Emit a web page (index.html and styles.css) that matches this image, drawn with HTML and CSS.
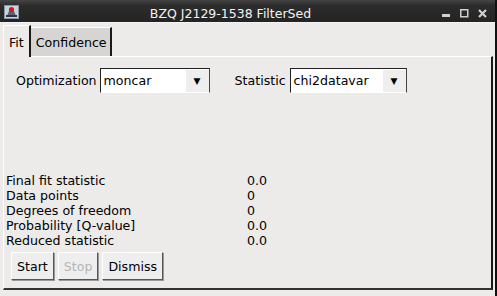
FILE: index.html
```html
<!DOCTYPE html>
<html lang="en">
<head>
    <meta charset="UTF-8">
    <title>BZQ J2129-1538 FilterSed</title>
    <link rel="stylesheet" href="styles.css">
</head>
<body>
    <div class="window">
        <div class="titlebar">
            <svg class="app-icon" width="15" height="14" viewBox="0 0 15 14">
                <rect x="0.5" y="0.5" width="14" height="13" fill="#c9d3df" stroke="#8a97a8"/>
                <path d="M3 11 L5 6 L10 6 L12 11 Z" fill="#5a6470"/>
                <rect x="2" y="10" width="11" height="2" fill="#2e3640"/>
                <circle cx="7.5" cy="4.5" r="2.6" fill="#d21a1a"/>
            </svg>
            <span class="title">BZQ J2129-1538 FilterSed</span>
            <div class="controls">
                <svg width="9" height="9" viewBox="0 0 9 9"><rect x="0" y="5" width="8" height="3" fill="#d0d0d0"/></svg>
                <svg width="9" height="9" viewBox="0 0 9 9"><rect x="0.75" y="0.75" width="7" height="7" fill="none" stroke="#d0d0d0" stroke-width="1.5"/></svg>
                <svg width="9" height="9" viewBox="0 0 9 9"><path d="M1 1 L8 8 M8 1 L1 8" stroke="#d0d0d0" stroke-width="2.2"/></svg>
            </div>
        </div>
        <div class="client">
            <div class="tabs">
                <div class="tab active">Fit</div>
                <div class="tab">Confidence</div>
            </div>
            <div class="panel">
                <div class="options">
                    <span class="label">Optimization</span>
                    <div class="combo opt">
                        <span class="field">moncar</span>
                        <span class="arrow">&#9660;</span>
                    </div>
                    <span class="label stat-label">Statistic</span>
                    <div class="combo stat">
                        <span class="field">chi2datavar</span>
                        <span class="arrow">&#9660;</span>
                    </div>
                </div>
                <div class="results">
                    <span>Final fit statistic</span><span>0.0</span>
                    <span>Data points</span><span>0</span>
                    <span>Degrees of freedom</span><span>0</span>
                    <span>Probability [Q-value]</span><span>0.0</span>
                    <span>Reduced statistic</span><span>0.0</span>
                </div>
                <div class="buttons">
                    <button class="btn">Start</button>
                    <button class="btn" disabled>Stop</button>
                    <button class="btn">Dismiss</button>
                </div>
            </div>
        </div>
    </div>
</body>
</html>
```
FILE: styles.css
```css
html, body{
    margin: 0;
    padding: 0;
    background: #111;
}
/* 窗口外框 */
.window{
    width: 495px;
    height: 296px;
    background: #ecebe9;
    font-family: "DejaVu Sans", sans-serif;
    font-size: 12.6px;
    color: #000;
    display: flex;
    flex-direction: column;
}
.titlebar{
    height: 22px;
    background: linear-gradient(#454545, #2c2c2c 25%, #242424);
    border-bottom: 1px solid #f4f4f4;
    display: flex;
    align-items: center;
    color: #f2f2f2;
}
.app-icon{
    margin: 2px 0 0 4px;
}
.title{
    flex: 1;
    text-align: center;
    font-size: 12.5px;
    padding-top: 4px;
}
.controls{
    margin-right: 8px;
    display: flex;
    gap: 9px;
    padding-top: 4px;
}
/* 内容区 */
.client{
    flex: 1;
    display: flex;
    flex-direction: column;
    padding: 2px 2px 0 3px;
}
.tabs{
    display: flex;
    align-items: flex-end;
    height: 31px;
}
.tab{
    height: 29px;
    line-height: 30px;
    box-sizing: border-box;
    border-top: 1px solid #fff;
    border-right: 2px solid #1a1a1a;
}
.tab.active{
    height: 32px;
    line-height: 33px;
    padding: 0 5px;
    border-left: 1px solid #fff;
    background: #ecebe9;
    position: relative;
    top: 1px;
}
.tab + .tab{
    background: #d6d5d3;
    padding: 0 3px 0 5px;
}
.panel{
    flex: 1;
    border-top: 1px solid #fff;
    border-left: 1px solid #fff;
    border-right: 2px solid #1a1a1a;
    border-bottom: 2px solid #333;
    margin-bottom: 6px;
    display: flex;
    flex-direction: column;
}
.options{
    display: flex;
    align-items: center;
    padding: 11px 0 0 12px;
}
.label{
    margin-right: 3px;
}
.stat-label{
    margin-left: 25px;
    margin-right: 4px;
}
.combo{
    display: flex;
    height: 25px;
    box-sizing: border-box;
    border-top: 1px solid #222;
    border-left: 1px solid #222;
    border-bottom: 1px solid #fff;
    border-right: 1px solid #444;
}
.combo .field{
    background: #fff;
    padding-left: 3px;
    line-height: 23px;
}
.opt .field{ width: 81px; }
.stat .field{ width: 88px; }
.combo .arrow{
    width: 23px;
    background: #eeeeee;
    border-left: 1px solid #fff;
    border-top: 1px solid #fff;
    font-size: 9px;
    text-align: center;
    line-height: 22px;
}
.results{
    margin-top: auto;
    display: grid;
    grid-template-columns: 241px auto;
    padding-left: 2px;
    line-height: 15px;
}
.buttons{
    display: flex;
    gap: 4px;
    padding: 4px 0 8px 7px;
}
.btn{
    font-family: "DejaVu Sans", sans-serif;
    font-size: 12.6px;
    height: 28px;
    padding: 0 5px;
    background: #eeeeee;
    border: 1px solid;
    border-color: #fff #555 #555 #fff;
    box-shadow: 1px 1px 0 #999;
    color: #000;
}
.btn:disabled{
    color: #b5b5b5;
}
```
